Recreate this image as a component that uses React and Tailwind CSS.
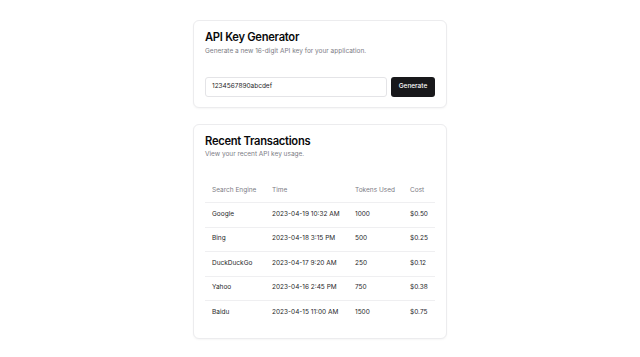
import React from "react";

const rows = [
  ["Google", "2023-04-19 10:32 AM", "1000", "$0.50"],
  ["Bing", "2023-04-18 3:15 PM", "500", "$0.25"],
  ["DuckDuckGo", "2023-04-17 9:20 AM", "250", "$0.12"],
  ["Yahoo", "2023-04-16 2:45 PM", "750", "$0.38"],
  ["Baidu", "2023-04-15 11:00 AM", "1500", "$0.75"],
];

export default function App() {
  return (
    <div
      className="min-h-[357px] w-full bg-white flex flex-col items-center pt-[20px] gap-[16px] antialiased"
      style={{ fontFamily: "Inter, 'Noto Sans', sans-serif" }}
    >
      <div className="w-[254px] rounded-[6px] border border-[#ececee] bg-white shadow-[0_1px_2px_rgba(0,0,0,0.04)] px-[11px] pt-[10px] pb-[10px]">
        <h2 className="text-[11.2px] leading-[12px] font-semibold tracking-tight text-[#09090b]">
          API Key Generator
        </h2>
        <p className="mt-[3px] text-[6.5px] leading-[10px] text-[#7c7c85]">
          Generate a new 16-digit API key for your application.
        </p>
        <div className="mt-[21px] flex gap-[4px]">
          <div className="flex-1 h-[20px] rounded-[3px] border border-[#e4e4e7] flex items-center px-[6px] text-[6.5px] text-[#27272a]">
            1234567890abcdef
          </div>
          <button className="w-[44px] h-[20px] rounded-[3px] bg-[#18181b] text-white text-[6.5px] font-medium flex items-center justify-center">
            Generate
          </button>
        </div>
      </div>

      <div className="w-[254px] rounded-[6px] border border-[#ececee] bg-white shadow-[0_1px_2px_rgba(0,0,0,0.04)] px-[11px] pt-[10px] pb-[12px]">
        <h2 className="text-[11.2px] leading-[12px] font-semibold tracking-tight text-[#09090b]">
          Recent Transactions
        </h2>
        <p className="mt-[2px] text-[6.5px] leading-[10px] text-[#7c7c85]">
          View your recent API key usage.
        </p>
        <div className="mt-[20px] text-[6.5px]">
          <div className="grid grid-cols-[60px_83px_55px_32px] h-[24px] items-center border-b border-[#efeff1] text-[#7c7c85]">
            <div className="pl-[7px]">Search Engine</div>
            <div className="pl-[7px]">Time</div>
            <div className="pl-[7px]">Tokens Used</div>
            <div className="pl-[7px]">Cost</div>
          </div>
          {rows.map((r, i) => (
            <div
              key={r[0]}
              className={
                "grid grid-cols-[60px_83px_55px_32px] h-[24.5px] items-center text-[#27272a] " +
                (i < rows.length - 1 ? "border-b border-[#efeff1]" : "")
              }
            >
              {r.map((c, j) => (
                <div key={j} className="pl-[7px]">
                  {c}
                </div>
              ))}
            </div>
          ))}
        </div>
      </div>
    </div>
  );
}
